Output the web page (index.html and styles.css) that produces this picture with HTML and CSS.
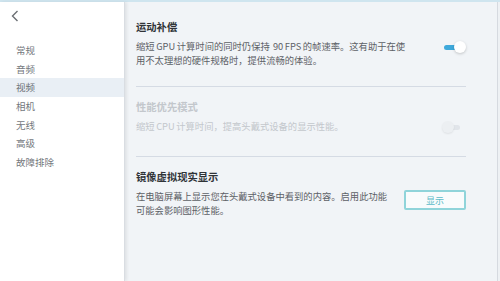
FILE: index.html
```html
<!DOCTYPE html>
<html lang="zh-CN">
<head>
  <meta charset="UTF-8" />
  <meta name="viewport" content="width=device-width, initial-scale=1.0"/>
  <title>视频设置</title>
  <link rel="stylesheet" href="styles.css">
</head>
<body>
  <div class="app">
    <aside class="sidebar">
      <button class="back-btn" aria-label="返回">
        <svg width="8" height="12" viewBox="0 0 8 12">
          <polyline points="6.5,1 1.5,6 6.5,11" fill="none" stroke="#6b6f74" stroke-width="1.4"/>
        </svg>
      </button>
      <ul class="nav">
        <li>常规</li>
        <li>音频</li>
        <li class="active">视频</li>
        <li>相机</li>
        <li>无线</li>
        <li>高级</li>
        <li>故障排除</li>
      </ul>
    </aside>

    <main class="content">
      <section class="setting">
        <h3>运动补偿</h3>
        <div class="setting-body">
          <p class="setting-desc">缩短 GPU 计算时间的同时仍保持&nbsp; 90 FPS 的帧速率。这有助于在使用不太理想的硬件规格时，提供流畅的体验。</p>
          <span class="toggle on"><span class="knob"></span></span>
        </div>
      </section>

      <section class="setting disabled short">
        <h3>性能优先模式</h3>
        <div class="setting-body">
          <p class="setting-desc">缩短 CPU 计算时间，提高头戴式设备的显示性能。</p>
          <span class="toggle"><span class="knob"></span></span>
        </div>
      </section>

      <section class="setting last">
        <h3>镜像虚拟现实显示</h3>
        <div class="setting-body">
          <p class="setting-desc narrow">在电脑屏幕上显示您在头戴式设备中看到的内容。启用此功能可能会影响图形性能。</p>
          <button class="show-btn">显示</button>
        </div>
      </section>
    </main>
  </div>
</body>
</html>
```

FILE: styles.css
```css
body {
  margin: 0;
  padding: 0;
  font-family: "Noto Sans CJK SC", "Noto Sans", sans-serif;
  background-color: #eef1f4;
}

.app {
  display: flex;
  height: 281px;
  border-top: 2px solid #cfe5ef;
  box-sizing: border-box;
}

.sidebar {
  width: 124px;
  flex-shrink: 0;
  background-color: #fff;
  border-right: 1px solid #d9dde2;
  box-shadow: 2px 0 3px rgba(0,0,0,0.07);
  position: relative;
  z-index: 1;
}

.back-btn {
  display: block;
  margin: 8px 0 0 9px;
  padding: 0;
  width: 12px;
  height: 14px;
  border: none;
  background: none;
}

.nav {
  list-style: none;
  margin: 17px 0 0;
  padding: 0;
}

.nav li {
  height: 18.7px;
  line-height: 18.7px;
  padding-left: 16px;
  font-size: 9.5px;
  color: #74787d;
}

.nav li.active {
  background-color: #e9eff5;
  color: #6b7075;
}

.content {
  flex: 1;
  padding: 5px 31px 0 11px;
  background-color: #f1f4f7;
  border-right: 1px solid #d6dae0;
  margin-right: 2px;
}

.setting {
  padding: 13px 0 19px;
  border-bottom: 1px solid #d5dbe4;
}

.setting.short {
  padding-bottom: 23px;
}

.setting.last {
  border-bottom: none;
}

.setting h3 {
  margin: 0 0 5px;
  font-size: 10.3px;
  line-height: 14px;
  font-weight: bold;
  color: #2f3337;
}

.setting-body {
  display: flex;
  justify-content: space-between;
  align-items: flex-start;
}

.setting-desc {
  margin: 0;
  width: 274px;
  font-size: 9.3px;
  line-height: 14px;
  word-spacing: -0.5px;
  color: #5d6166;
}

.setting-desc.narrow {
  width: 255px;
}

.setting.disabled h3,
.setting.disabled .setting-desc {
  color: #c3c7cc;
}

.toggle {
  position: relative;
  width: 24px;
  height: 12px;
  margin-top: 2px;
}

.toggle::before {
  content: "";
  position: absolute;
  left: 2px;
  top: 4px;
  width: 16px;
  height: 5px;
  border-radius: 3px;
  background-color: #e1e5ea;
}

.toggle.on::before {
  background-color: #3fa9db;
}

.knob {
  position: absolute;
  top: 0;
  left: 0;
  width: 12px;
  height: 12px;
  border-radius: 50%;
  background-color: #eceff2;
  box-shadow: 0 1px 2px rgba(0,0,0,0.08);
}

.toggle.on .knob {
  left: 12px;
  background-color: #fff;
  box-shadow: 0 1px 3px rgba(0,0,0,0.2);
}

.show-btn {
  width: 62px;
  height: 20px;
  margin-top: 1px;
  border: 2px solid #8fd4da;
  border-radius: 2px;
  background-color: #f8fbfc;
  color: #5cbcc8;
  font-family: "Noto Sans CJK SC", sans-serif;
  font-size: 9px;
  padding: 0;
}
```
